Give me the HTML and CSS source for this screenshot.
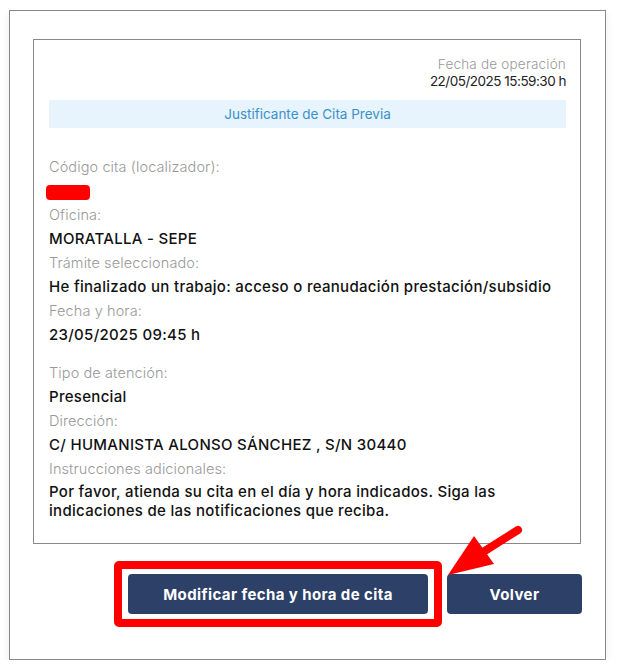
FILE: index.html
```html
<!DOCTYPE html>
<html lang="es">
<head>
    <meta charset="UTF-8">
    <meta name="viewport" content="width=device-width, initial-scale=1.0">
    <title>Justificante de Cita Previa</title>
    <link rel="stylesheet" href="styles.css">
</head>
<body>
    <div class="frame">
        <div class="card">
            <div class="operation">
                <div class="operation-label">Fecha de operación</div>
                <div class="operation-date">22/05/2025 15:59:30 h</div>
            </div>
            <div class="card-title">Justificante de Cita Previa</div>

            <dl class="details">
                <dt>Código cita (localizador):</dt>
                <dd><span class="redacted"></span></dd>
                <dt>Oficina:</dt>
                <dd>MORATALLA - SEPE</dd>
                <dt>Trámite seleccionado:</dt>
                <dd>He finalizado un trabajo: acceso o reanudación prestación/subsidio</dd>
                <dt>Fecha y hora:</dt>
                <dd>23/05/2025 09:45 h</dd>
            </dl>

            <dl class="details second">
                <dt>Tipo de atención:</dt>
                <dd>Presencial</dd>
                <dt>Dirección:</dt>
                <dd>C/ HUMANISTA ALONSO SÁNCHEZ , S/N 30440</dd>
                <dt>Instrucciones adicionales:</dt>
                <dd class="notes">Por favor, atienda su cita en el día y hora indicados. Siga las indicaciones de las notificaciones que reciba.</dd>
            </dl>
        </div>

        <div class="actions">
            <div class="highlight">
                <button class="btn btn-wide">Modificar fecha y hora de cita</button>
            </div>
            <button class="btn btn-back">Volver</button>
        </div>

        <!-- Red arrow pointing at the highlighted button -->
        <svg class="arrow" width="90" height="60" viewBox="0 0 90 60">
            <line x1="78" y1="8" x2="40" y2="32" stroke="#ff0000" stroke-width="8" stroke-linecap="round"/>
            <polygon points="8,53 34,14 54,42" fill="#ff0000"/>
        </svg>
    </div>
</body>
</html>
```

FILE: styles.css
```css
body {
    margin: 0;
    padding: 10px 13px 0 9px;
    background: #fff;
    font-family: 'Inter', 'Open Sans', sans-serif;
    color: #111;
}

.frame {
    position: relative;
    border: 1px solid #888;
    padding: 28px 24px 32px 23px;
    box-shadow: 0 4px 8px rgba(0, 0, 0, 0.08);
}

.card {
    border: 1px solid #888;
    padding: 16px 14px 23px 15px;
}

.operation {
    text-align: right;
    font-size: 13.5px;
    line-height: 17px;
}

.operation-label {
    color: #999;
    font-weight: 300;
    letter-spacing: 0.2px;
}

.operation-date {
    color: #222;
    letter-spacing: -0.5px;
}

.card-title {
    margin-top: 10px;
    height: 28px;
    line-height: 28px;
    background: #e7f3fd;
    color: #3b92c9;
    text-align: center;
    font-size: 13.5px;
}

.details {
    margin: 27px 0 0;
}

.details.second {
    margin-top: 14px;
}

.details dt {
    color: #999;
    font-weight: 300;
    font-size: 14.5px;
    letter-spacing: 0.1px;
    line-height: 24px;
}

.details dd {
    margin: 0;
    font-weight: 500;
    font-size: 15px;
    letter-spacing: 0.3px;
    line-height: 24px;
    color: #111;
}

.details dd.notes {
    margin-top: 1px;
    line-height: 19px;
}

.redacted {
    display: inline-block;
    width: 44px;
    height: 15px;
    margin: 6px 0 0 -3px;
    vertical-align: top;
    background: #ff0000;
    border-radius: 4px;
}

.actions {
    display: flex;
    justify-content: flex-end;
    align-items: center;
    gap: 5px;
    margin-top: 17px;
    margin-right: -1px;
}

.highlight {
    border: 8px solid #ff0000;
    border-radius: 5px;
    padding: 5px 6px;
}

.btn {
    height: 40px;
    border: none;
    border-radius: 4px;
    background: #2c4068;
    color: #fff;
    font-family: inherit;
    font-weight: 700;
    font-size: 15px;
    letter-spacing: 0.4px;
    cursor: pointer;
}

.btn-wide {
    display: block;
    width: 300px;
}

.btn-back {
    width: 135px;
}

.arrow {
    position: absolute;
    left: 430px;
    top: 511px;
}
```
